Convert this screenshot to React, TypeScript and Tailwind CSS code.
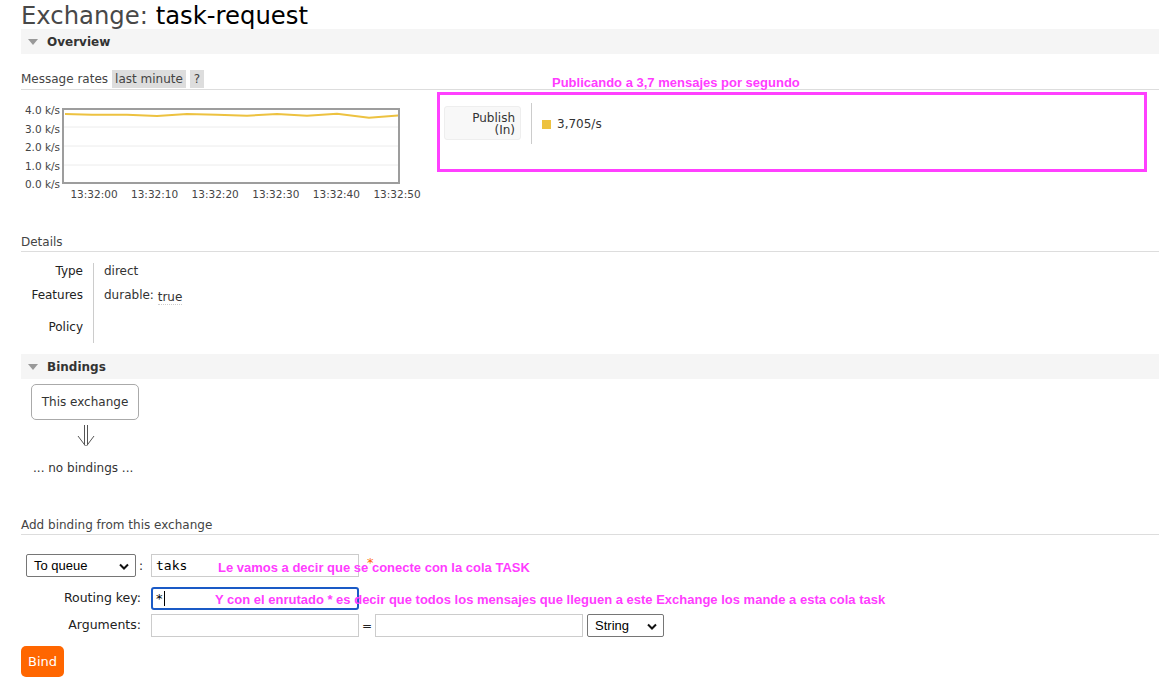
import React from 'react';

const font = { fontFamily: '"DejaVu Sans", Verdana, sans-serif' };
const annot = 'absolute font-bold text-[#ff3cff] text-[13px] whitespace-nowrap [font-family:"Liberation_Sans",Arial,sans-serif]';

const points: [number, number][] = [
  [1, 4], [28, 4.7], [63, 4.7], [93, 6], [123, 4], [153, 4.7], [183, 5.7],
  [213, 4], [243, 5.7], [273, 3.7], [305, 7.7], [335, 5.3],
];

const SectionBar: React.FC<{ title: string }> = ({ title }) => (
  <div className="h-[25px] bg-[#f5f5f5] flex items-center pl-[7px] gap-[9px]">
    <svg width="10" height="6" viewBox="0 0 10 6">
      <polygon points="0,0 10,0 5,6" fill="#999" />
    </svg>
    <span className="font-bold text-[12px] text-[#333]">{title}</span>
  </div>
);

const Chart: React.FC = () => {
  const yLabels = ['4.0 k/s', '3.0 k/s', '2.0 k/s', '1.0 k/s', '0.0 k/s'];
  const xLabels = ['13:32:00', '13:32:10', '13:32:20', '13:32:30', '13:32:40', '13:32:50'];
  return (
    <div className="relative w-[401px] h-[96px] text-[10.5px] text-[#444]">
      {yLabels.map((l, i) => (
        <div key={l} className="absolute left-0 w-[39px] text-right leading-[12px]" style={{ top: i * 18.5 - 4 }}>
          {l}
        </div>
      ))}
      <div className="absolute left-[41px] top-0 w-[338px] h-[76px] border-2 border-[#9d9d9d]">
        <svg width="334" height="72" className="block">
          {[17, 36, 55].map((y) => (
            <line key={y} x1="0" x2="334" y1={y} y2={y} stroke="#ececec" strokeWidth="1" />
          ))}
          <polyline
            points={points.map(([x, y]) => `${x},${y}`).join(' ')}
            fill="none"
            stroke="#edc240"
            strokeWidth="2"
          />
        </svg>
      </div>
      {xLabels.map((l, i) => (
        <div key={l} className="absolute top-[80px] w-[60px] text-center leading-[12px]" style={{ left: 43 + i * 60.6 }}>
          {l}
        </div>
      ))}
    </div>
  );
};

const Chevron = () => (
  <svg width="10" height="7" viewBox="0 0 10 7" className="absolute right-[6px] top-[8px]">
    <polyline points="1,1.5 5,5.5 9,1.5" fill="none" stroke="#111" strokeWidth="2" />
  </svg>
);

const FakeSelect: React.FC<{ label: string; w: string }> = ({ label, w }) => (
  <div className={`relative h-[23px] ${w} border border-[#767676] rounded-[2px] bg-white pl-[7px] flex items-center text-[13px] text-black [font-family:"Liberation_Sans",Arial,sans-serif]`}>
    {label}
    <Chevron />
  </div>
);

export default function App() {
  return (
    <div className="relative w-[1174px] h-[683px] bg-white text-[#444] text-[12px] overflow-hidden" style={font}>
      <div className="pl-[21px] pr-[15px]">
        <h1 className="text-[24.3px] leading-[29px] pt-[1px] -mb-[1px] text-[#484848] font-normal">
          Exchange: <span className="text-black">task-request</span>
        </h1>
        <SectionBar title="Overview" />

        <div className="mt-[16px] flex items-center border-b border-[#ddd] pb-[1px]">
          <span className="mr-[4px]">Message rates</span>
          <span className="bg-[#ddd] px-[3px] leading-[18px]">last minute</span>
          <span className="bg-[#ddd] px-[4px] ml-[4px] leading-[18px]">?</span>
        </div>

        <div className="flex mt-[14px]">
          <div className="pt-[4px]">
            <Chart />
          </div>
          <div className="ml-[22px] mt-[2px] flex items-start">
            <div className="w-[77px] h-[34px] bg-[#f8f8f8] border border-[#eee] rounded-[3px] text-right pr-[5px] pt-[5px] leading-[12px] text-[#333]">
              Publish
              <br />
              (In)
            </div>
            <div className="ml-[10px] -mt-[3px] h-[41px] border-l border-[#ccc] pl-[10px] pt-[15px] flex items-start gap-[6px]">
              <span className="w-[9px] h-[9px] bg-[#edc240] mt-[2px]" />
              <span className="leading-[12px] text-[#333]">3,705/s</span>
            </div>
          </div>
        </div>

        <div className="mt-[30px] border-b border-[#ddd] leading-[17px]">Details</div>
        <div className="mt-[11px] flex flex-col">
          {[
            ['Type', 'direct', 16],
            ['Features', 'durable', 32],
            ['Policy', '', 32],
          ].map(([k, v, h]) => (
            <div key={k as string} className="flex" style={{ height: h as number }}>
              <div className="w-[72px] pr-[10px] text-right text-[#222] flex items-center justify-end">{k}</div>
              <div className="border-l border-[#ccc] pl-[10px] flex items-center text-[#333]">
                {v === 'durable' ? (
                  <span>
                    durable: <span className="relative top-[2px] border-b border-dotted border-[#ccc]">true</span>
                  </span>
                ) : (
                  v
                )}
              </div>
            </div>
          ))}
        </div>

        <div className="mt-[11px]">
          <SectionBar title="Bindings" />
        </div>
        <div className="ml-[10px] mt-[5px] w-[108px] h-[36px] border border-[#aaa] rounded-[5px] flex items-center justify-center text-[#333]">
          This exchange
        </div>
        <svg width="18" height="22" viewBox="0 0 18 22" className="ml-[56px] mt-[5px] block">
          <line x1="7.5" y1="0" x2="7.5" y2="20" stroke="#555" strokeWidth="1" />
          <line x1="10.5" y1="0" x2="10.5" y2="20" stroke="#555" strokeWidth="1" />
          <line x1="1" y1="11" x2="8.5" y2="21" stroke="#555" strokeWidth="1" />
          <line x1="17" y1="11" x2="9.5" y2="21" stroke="#555" strokeWidth="1" />
        </svg>
        <div className="ml-[12px] mt-[12px] text-[#333]">... no bindings ...</div>

        <div className="mt-[40px] border-b border-[#ddd] leading-[17px]">Add binding from this exchange</div>

        <div className="mt-[19px] flex flex-col gap-[9px] text-[#222]">
          <div className="flex items-center">
            <div className="ml-[5px]">
              <FakeSelect label="To queue" w="w-[110px]" />
            </div>
            <span className="ml-[3px] w-[12px]">:</span>
            <div className="h-[23px] w-[208px] border border-[#ccc] pl-[4px] flex items-center text-[13px] text-black [font-family:'DejaVu_Sans_Mono',monospace]">
              taks
            </div>
            <span className="ml-[8px] -mt-[5px] text-[#f60] text-[13px]">*</span>
          </div>
          <div className="flex items-center mt-[1px]">
            <span className="w-[120px] text-right text-[12.5px]">Routing key:</span>
            <div className="ml-[10px] h-[23px] w-[208px] border-2 border-[#1a5ac6] rounded-[3px] pl-[3px] flex items-center text-[13px] text-black">
              *<span className="w-[1px] h-[15px] bg-black ml-[1px]" />
            </div>
          </div>
          <div className="flex items-center -mt-[5px]">
            <span className="w-[120px] text-right text-[12.5px]">Arguments:</span>
            <div className="ml-[10px] h-[23px] w-[208px] border border-[#ccc]" />
            <span className="mx-[3px]">=</span>
            <div className="h-[23px] w-[208px] border border-[#ccc]" />
            <div className="ml-[4px]">
              <FakeSelect label="String" w="w-[77px]" />
            </div>
          </div>
        </div>

        <button className="mt-[9px] w-[43px] h-[31px] bg-[#ff6600] rounded-[5px] text-white text-[13px]">Bind</button>
      </div>

      {/* annotations */}
      <div className={annot} style={{ left: 552, top: 73 }}>Publicando a 3,7 mensajes por segundo</div>
      <div className="absolute left-[437px] top-[92px] w-[710px] h-[80px] border-[3px] border-[#ff40ff]" />
      <div className={annot} style={{ left: 218, top: 558 }}>Le vamos a decir que se conecte con la cola TASK</div>
      <div className={annot} style={{ left: 215, top: 590 }}>
        Y con el enrutado * es decir que todos los mensajes que lleguen a este Exchange los mande a esta cola task
      </div>
    </div>
  );
}
